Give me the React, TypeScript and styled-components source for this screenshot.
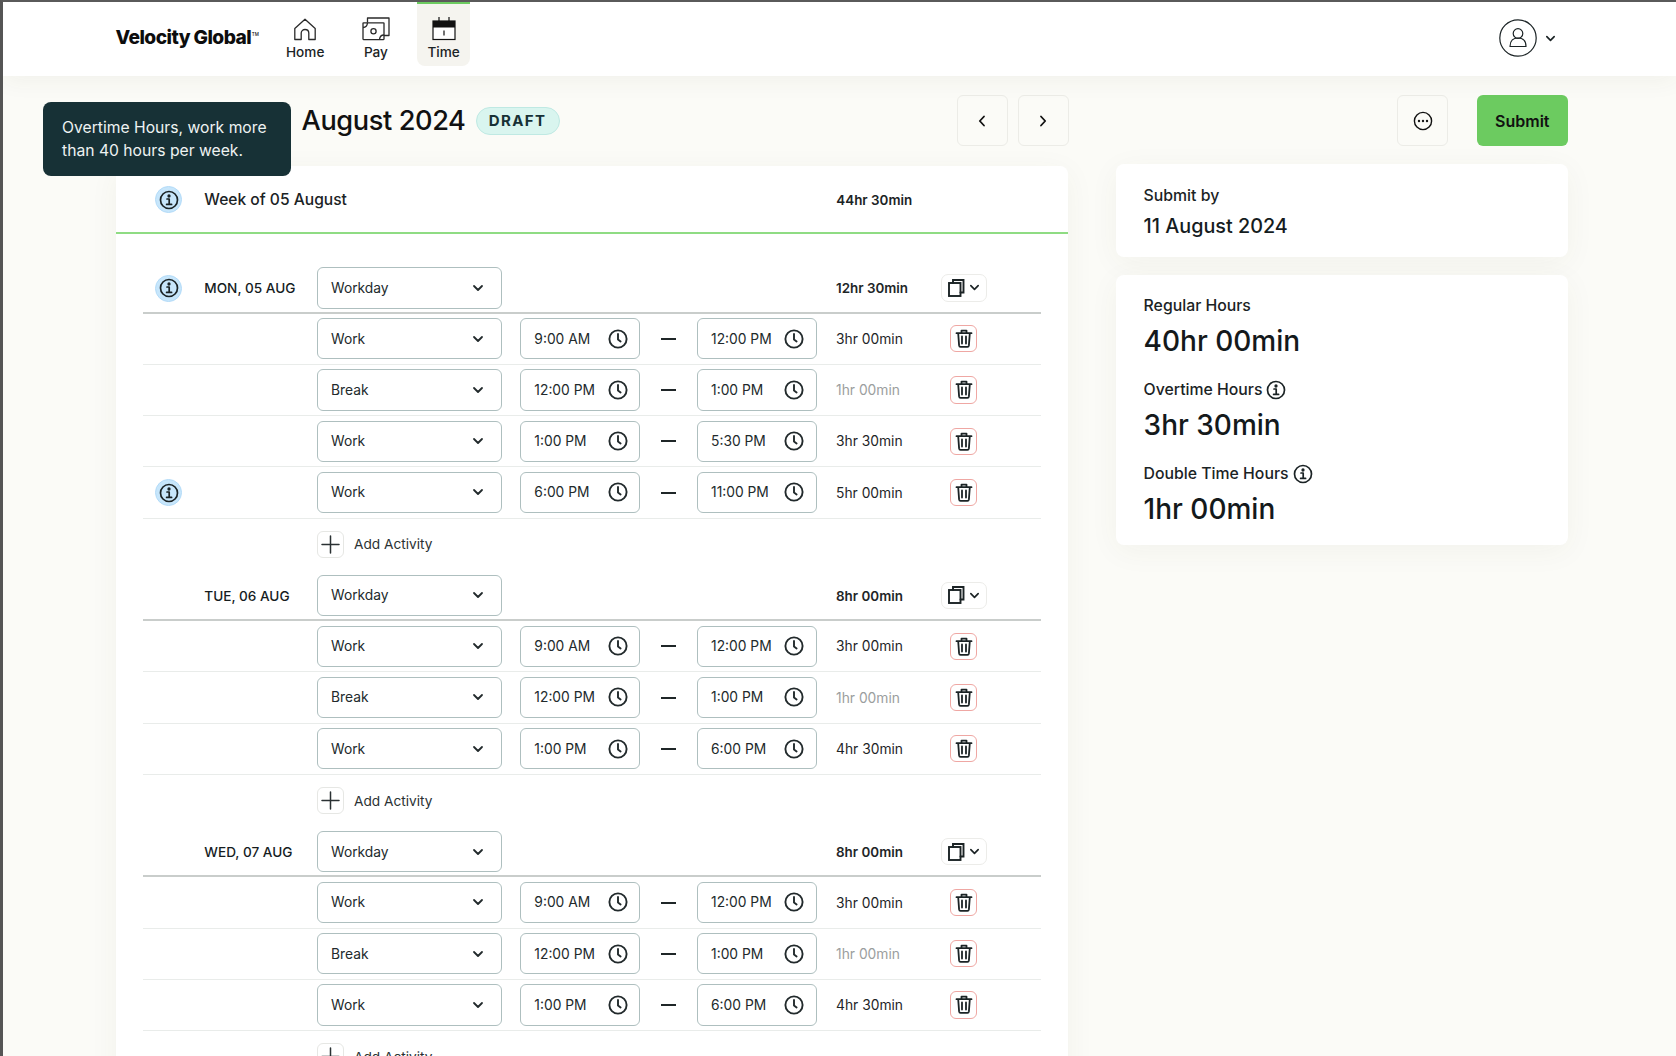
import React from "react";
import styled, { createGlobalStyle } from "styled-components";

const Global = createGlobalStyle`
  html, body { margin: 0; padding: 0; height: 100%; overflow: hidden; }
  body { font-family: Inter, "Noto Sans", sans-serif; color: #1b2325; background: #fbfbf7; }
  #root { height: 100%; }
  * { box-sizing: border-box; }
`;

const Page = styled.div`
  position: relative;
  height: 1056px;
  overflow: hidden;
  border-top: 2px solid #5a5a5a;
  border-left: 3px solid #555;
  background: #fbfbf7;
`;
const Header = styled.header`
  height: 74px;
  background: #fff;
  display: flex;
  align-items: flex-start;
  padding: 0 120px 0 112.5px;
  box-shadow: 0 4px 24px rgba(60, 60, 40, 0.06);
  position: relative;
`;
const Logo = styled.div`
  width: 160.5px;
  height: 70px;
  display: flex;
  align-items: center;
  font-weight: 800;
  font-size: 19.2px;
  letter-spacing: -0.55px;
  color: #0d0d0d;
  sup { font-size: 4.5px; font-weight: 500; margin-left: 0.5px; position: relative; top: -3px; letter-spacing: 0; }
`;
const Nav = styled.nav`
  display: flex;
  gap: 16px;
`;
const NavItem = styled.div<{ $active?: boolean }>`
  min-width: 51px;
  height: 64px;
  padding: 13px 10px 0;
  display: flex;
  flex-direction: column;
  align-items: center;
  gap: 2px;
  font-size: 13.6px;
  line-height: 18px;
  font-weight: 500;
  border-top: 2.5px solid ${(p) => (p.$active ? "#6ccb60" : "transparent")};
  background: ${(p) => (p.$active ? "#f5f4ef" : "transparent")};
  border-radius: 0 0 8px 8px;
  svg { display: block; }
`;
const Account = styled.div`
  margin-left: auto;
  height: 72px;
  display: flex;
  align-items: center;
  gap: 8.5px;
`;
const Main = styled.main`
  display: grid;
  grid-template-columns: 952px 452.4px;
  column-gap: 47.6px;
  row-gap: 18.3px;
  padding: 19px 0 0 113px;
  align-items: start;
`;
const Toolbar = styled.div`
  height: 51px;
  display: flex;
  align-items: center;
`;
const TitleBox = styled.div`
  display: flex;
  align-items: center;
  gap: 10px;
  padding-left: 185.5px;
`;
const Title = styled.h1`
  margin: 0;
  font-size: 27.2px;
  font-weight: 500;
  letter-spacing: -0.4px;
  color: #111;
`;
const Badge = styled.span`
  height: 28px;
  width: 84px;
  display: flex;
  align-items: center;
  justify-content: center;
  border-radius: 14px;
  background: #d9f5ef;
  border: 1.5px solid #bfe9e3;
  color: #173136;
  font-size: 15px;
  font-weight: 700;
  letter-spacing: 1.4px;
`;
const IconButton = styled.button`
  width: 51px;
  height: 51px;
  padding: 0;
  display: flex;
  align-items: center;
  justify-content: center;
  background: #fbfbf7;
  border: 1.5px solid #ecece7;
  border-radius: 6px;
  color: #111;
`;
const Pager = styled.div`
  margin-left: auto;
  margin-right: -0.6px;
  display: flex;
  gap: 10px;
`;
const SideActions = styled(Toolbar)`
  justify-content: flex-end;
  gap: 28.6px;
`;
const SubmitButton = styled.button`
  width: 91.4px;
  height: 51px;
  border: none;
  border-radius: 6px;
  background: #6ccb60;
  color: #111;
  font: 600 16px Inter, sans-serif;
`;
const Card = styled.section`
  background: #fff;
  border-radius: 8px;
  box-shadow: 0 6px 30px rgba(70, 70, 40, 0.05);
`;
const TimeCard = styled(Card)`
  margin-top: 1.4px;
  padding-bottom: 40px;
`;
const WeekRow = styled.div`
  display: grid;
  grid-template-columns: 61.3px 632px 1fr;
  align-items: center;
  height: 68.5px;
  padding: 2px 27px 0;
  border-bottom: 2px solid #8fdc83;
  margin-bottom: 28.2px;
  font-size: 15.6px;
  font-weight: 500;
`;
const WeekTotal = styled.span`
  font-size: 13.4px;
  font-weight: 600;
`;
const Row = styled.div<{ $day?: boolean; $plain?: boolean }>`
  display: grid;
  grid-template-columns: 61.3px 112.7px 184.7px 138.4px 57px 119.7px 119px 56px 1fr;
  align-items: center;
  height: 51.25px;
  margin: 0 27px;
  padding-top: ${(p) => (p.$day ? "2px" : "0")};
  border-bottom: ${(p) =>
    p.$plain ? "none" : p.$day ? "2px solid #c9cdcb" : "1.5px solid #e9ecea"};
`;
const InfoBadge = styled.span`
  width: 27px;
  height: 27px;
  margin-left: 12px;
  border-radius: 50%;
  display: flex;
  align-items: center;
  justify-content: center;
  background: #c7e6fb;
  border: 1px solid #b3dbf8;
`;
const DayLabel = styled.span`
  font-size: 13.6px;
  font-weight: 500;
  color: #151c1e;
  white-space: nowrap;
`;
const Field = styled.div<{ $select?: boolean }>`
  height: 41.4px;
  display: flex;
  align-items: center;
  justify-content: space-between;
  padding: ${(p) => (p.$select ? "0 16.5px 0 13px" : "0 11.5px 0 13px")};
  background: #fff;
  border: 1.5px solid #aebfbf;
  border-radius: 6px;
  font-size: 13.8px;
  color: #222a2c;
`;
const TimeCell = styled.div`
  margin-left: 18.7px;
`;
const DashCell = styled.div`
  display: flex;
  justify-content: center;
`;
const Dash = styled.span`
  width: 14.5px;
  height: 2px;
  background: #1f2628;
`;
const Duration = styled.span<{ $bold?: boolean; $muted?: boolean }>`
  font-size: ${(p) => (p.$bold ? "13.4px" : "13.8px")};
  padding-left: 19.3px;
  font-weight: ${(p) => (p.$bold ? 600 : 400)};
  color: ${(p) => (p.$muted ? "#9b9e9e" : "#1e2527")};
  white-space: nowrap;
`;
const Actions = styled.div`
  display: flex;
  justify-content: center;
`;
const TrashButton = styled.span`
  width: 27.4px;
  height: 27.4px;
  display: flex;
  align-items: center;
  justify-content: center;
  border: 1.3px solid #efa7a3;
  border-radius: 6px;
`;
const CopyButton = styled.span`
  width: 45.5px;
  height: 27.4px;
  display: flex;
  align-items: center;
  justify-content: center;
  gap: 4px;
  border: 1.3px solid #ecece9;
  border-radius: 7px;
`;
const AddActivity = styled.div`
  grid-column: 3 / 6;
  display: flex;
  align-items: center;
  gap: 10px;
  font-size: 13.7px;
  color: #2a3133;
`;
const PlusBox = styled.span`
  width: 27px;
  height: 27px;
  display: flex;
  align-items: center;
  justify-content: center;
  border: 1.3px solid #e6e7e4;
  border-radius: 6px;
`;
const Side = styled.aside`
  display: flex;
  flex-direction: column;
  gap: 17.7px;
`;
const SubmitCard = styled(Card)`
  height: 93px;
  padding: 20.5px 28px 0;
`;
const SmallLabel = styled.div`
  display: flex;
  align-items: center;
  gap: 4px;
  font-size: 15.8px;
  line-height: 22px;
  font-weight: 500;
  color: #1b2325;
`;
const DateValue = styled.div`
  margin-top: 8px;
  font-size: 19.8px;
  line-height: 22px;
  font-weight: 500;
  color: #151c1e;
`;
const StatsCard = styled(Card)`
  height: 270px;
  padding: 19.7px 28px 0;
  display: flex;
  flex-direction: column;
  gap: 20px;
`;
const Stat = styled.div`
  height: 64px;
`;
const StatValue = styled.div`
  margin-top: 6px;
  font-size: 28px;
  line-height: 36px;
  font-weight: 500;
  color: #14191b;
`;
const Tooltip = styled.div`
  position: absolute;
  left: 40px;
  top: 99.7px;
  width: 248px;
  height: 74.3px;
  padding: 14px 19px;
  background: #173136;
  border-radius: 8px;
  color: #eef3f2;
  font-size: 15.7px;
  line-height: 23.5px;
`;

const stroke = { fill: "none", stroke: "currentColor", strokeLinecap: "round", strokeLinejoin: "round" } as const;

const Chevron = ({ size = 12, w = 1.8 }: { size?: number; w?: number }) => (
  <svg width={size} height={size} viewBox="0 0 12 12" {...stroke} strokeWidth={w}>
    <path d="M2 4l4 4 4-4" />
  </svg>
);
const Clock = () => (
  <svg width="20" height="20" viewBox="0 0 20 20" {...stroke} strokeWidth="1.9">
    <circle cx="10" cy="10" r="8.6" />
    <path d="M10 5v5.4l2.6 2" />
  </svg>
);
const Info = ({ size = 20 }: { size?: number }) => (
  <svg width={size} height={size} viewBox="0 0 20 20" {...stroke} strokeWidth="1.7">
    <circle cx="10" cy="10" r="8.5" />
    <circle cx="10" cy="6" r="0.8" fill="currentColor" />
    <path d="M8 9h2.2v5.2M7.6 14.4h5" />
  </svg>
);
const Trash = () => (
  <svg width="18" height="19" viewBox="0 0 18 19" {...stroke} strokeWidth="1.8">
    <path d="M1.5 4.2h15M6.5 4V1.6h5V4M3.2 4.2l.9 12.2c.1.9.6 1.4 1.4 1.4h7c.8 0 1.3-.5 1.4-1.4l.9-12.2" />
    <path d="M7 7.5v7M11 7.5v7" />
  </svg>
);
const Copy = () => (
  <svg width="17" height="18" viewBox="0 0 17 18" {...stroke} strokeWidth="1.9" strokeLinejoin="miter">
    <path d="M5 4V1h10.5v12.5H12.5" />
    <rect x="1" y="4" width="11.5" height="13" />
  </svg>
);
const Plus = () => (
  <svg width="19" height="19" viewBox="0 0 19 19" {...stroke} strokeWidth="1.5">
    <path d="M9.5 1v17M1 9.5h17" />
  </svg>
);
const HomeIcon = () => (
  <svg width="24" height="24" viewBox="0 0 24 24" fill="none" stroke="#2a2a2a" strokeWidth="1.3" strokeLinejoin="round">
    <path d="M1.8 11.5L12 2.2l10.2 9.3v11h-6.4v-6.4c0-4.8-7.6-4.8-7.6 0v6.4H1.8z" />
  </svg>
);
const PayIcon = () => (
  <svg width="28" height="24" viewBox="0 0 28 24" fill="none" stroke="#2a2a2a" strokeWidth="1.3" strokeLinejoin="round">
    <path d="M5.5 5.5V1H27v17.500h-5" />
    <rect x="1" y="5.8" width="21" height="16.8" rx="0.5" />
    <circle cx="11.5" cy="14.2" r="2.6" />
    <path d="M1 10.5c2.5 0 4.3-2 4.5-4.7M22 18c-2.5 0-4.3 2-4.5 4.6" />
  </svg>
);
const CalendarIcon = () => (
  <svg width="24" height="24" viewBox="0 0 24 24">
    <path d="M7 0v5M17 0v5" stroke="#111" strokeWidth="1.2" />
    <rect x="1" y="4" width="22" height="18.5" fill="#fff" stroke="#111" strokeWidth="1.2" />
    <rect x="1" y="4" width="22" height="6.5" fill="#111" />
    <path d="M12 13.5v5" stroke="#111" strokeWidth="1.2" />
  </svg>
);
const UserIcon = () => (
  <svg width="38" height="38" viewBox="0 0 38 38" {...stroke} strokeWidth="1.2">
    <circle cx="19" cy="19" r="18.2" />
    <circle cx="19" cy="14.5" r="4.8" />
    <path d="M11 27.5c0-6 3.5-8.5 8-8.5s8 2.5 8 8.5z" />
  </svg>
);
const Dots = () => (
  <svg width="20" height="20" viewBox="0 0 20 20" fill="none" stroke="currentColor" strokeWidth="1.4">
    <circle cx="10" cy="10" r="8.6" />
    <circle cx="6" cy="10" r="0.5" fill="currentColor" />
    <circle cx="10" cy="10" r="0.5" fill="currentColor" />
    <circle cx="14" cy="10" r="0.5" fill="currentColor" />
  </svg>
);
const ChevronSide = ({ left }: { left?: boolean }) => (
  <svg width="12" height="14" viewBox="0 0 12 14" {...stroke} strokeWidth="1.8">
    <path d={left ? "M8 2.5L3.8 7 8 11.5" : "M4 2.5L8.2 7 4 11.5"} />
  </svg>
);

type Entry = { kind: string; from: string; to: string; dur: string; info?: boolean };
type Day = { label: string; info?: boolean; total: string; entries: Entry[] };

const days: Day[] = [
  {
    label: "MON, 05 AUG",
    info: true,
    total: "12hr 30min",
    entries: [
      { kind: "Work", from: "9:00 AM", to: "12:00 PM", dur: "3hr 00min" },
      { kind: "Break", from: "12:00 PM", to: "1:00 PM", dur: "1hr 00min" },
      { kind: "Work", from: "1:00 PM", to: "5:30 PM", dur: "3hr 30min" },
      { kind: "Work", from: "6:00 PM", to: "11:00 PM", dur: "5hr 00min", info: true },
    ],
  },
  {
    label: "TUE, 06 AUG",
    total: "8hr 00min",
    entries: [
      { kind: "Work", from: "9:00 AM", to: "12:00 PM", dur: "3hr 00min" },
      { kind: "Break", from: "12:00 PM", to: "1:00 PM", dur: "1hr 00min" },
      { kind: "Work", from: "1:00 PM", to: "6:00 PM", dur: "4hr 30min" },
    ],
  },
  {
    label: "WED, 07 AUG",
    total: "8hr 00min",
    entries: [
      { kind: "Work", from: "9:00 AM", to: "12:00 PM", dur: "3hr 00min" },
      { kind: "Break", from: "12:00 PM", to: "1:00 PM", dur: "1hr 00min" },
      { kind: "Work", from: "1:00 PM", to: "6:00 PM", dur: "4hr 30min" },
    ],
  },
];

const InfoCell = ({ show }: { show?: boolean }) => (
  <div>{show && <InfoBadge><Info /></InfoBadge>}</div>
);

const DayBlock = ({ day }: { day: Day }) => (
  <>
    <Row $day>
      <InfoCell show={day.info} />
      <DayLabel>{day.label}</DayLabel>
      <Field $select>Workday<Chevron /></Field>
      <div />
      <div />
      <div />
      <Duration $bold>{day.total}</Duration>
      <Actions>
        <CopyButton><Copy /><Chevron size={11} /></CopyButton>
      </Actions>
    </Row>
    {day.entries.map((e, i) => (
      <Row key={i}>
        <InfoCell show={e.info} />
        <div />
        <Field $select>{e.kind}<Chevron /></Field>
        <TimeCell>
          <Field>{e.from}<Clock /></Field>
        </TimeCell>
        <DashCell><Dash /></DashCell>
        <Field>{e.to}<Clock /></Field>
        <Duration $muted={e.kind === "Break"}>{e.dur}</Duration>
        <Actions>
          <TrashButton><Trash /></TrashButton>
        </Actions>
      </Row>
    ))}
    <Row $plain>
      <AddActivity>
        <PlusBox><Plus /></PlusBox>
        Add Activity
      </AddActivity>
    </Row>
  </>
);

export default function App() {
  return (
    <Page>
      <Global />
      <Header>
        <Logo>Velocity Global<sup>TM</sup></Logo>
        <Nav>
          <NavItem><HomeIcon />Home</NavItem>
          <NavItem><PayIcon />Pay</NavItem>
          <NavItem $active><CalendarIcon />Time</NavItem>
        </Nav>
        <Account>
          <UserIcon />
          <Chevron size={11} />
        </Account>
      </Header>
      <Main>
        <Toolbar>
          <TitleBox>
            <Title>August 2024</Title>
            <Badge>DRAFT</Badge>
          </TitleBox>
          <Pager>
            <IconButton><ChevronSide left /></IconButton>
            <IconButton><ChevronSide /></IconButton>
          </Pager>
        </Toolbar>
        <SideActions>
          <IconButton><Dots /></IconButton>
          <SubmitButton>Submit</SubmitButton>
        </SideActions>
        <TimeCard>
          <WeekRow>
            <InfoCell show />
            <span>Week of 05 August</span>
            <WeekTotal>44hr 30min</WeekTotal>
          </WeekRow>
          {days.map((d) => <DayBlock key={d.label} day={d} />)}
        </TimeCard>
        <Side>
          <SubmitCard>
            <SmallLabel>Submit by</SmallLabel>
            <DateValue>11 August 2024</DateValue>
          </SubmitCard>
          <StatsCard>
            <Stat>
              <SmallLabel>Regular Hours</SmallLabel>
              <StatValue>40hr 00min</StatValue>
            </Stat>
            <Stat>
              <SmallLabel>Overtime Hours <Info /></SmallLabel>
              <StatValue>3hr 30min</StatValue>
            </Stat>
            <Stat>
              <SmallLabel>Double Time Hours <Info /></SmallLabel>
              <StatValue>1hr 00min</StatValue>
            </Stat>
          </StatsCard>
        </Side>
      </Main>
      <Tooltip>Overtime Hours, work more than 40 hours per week.</Tooltip>
    </Page>
  );
}
